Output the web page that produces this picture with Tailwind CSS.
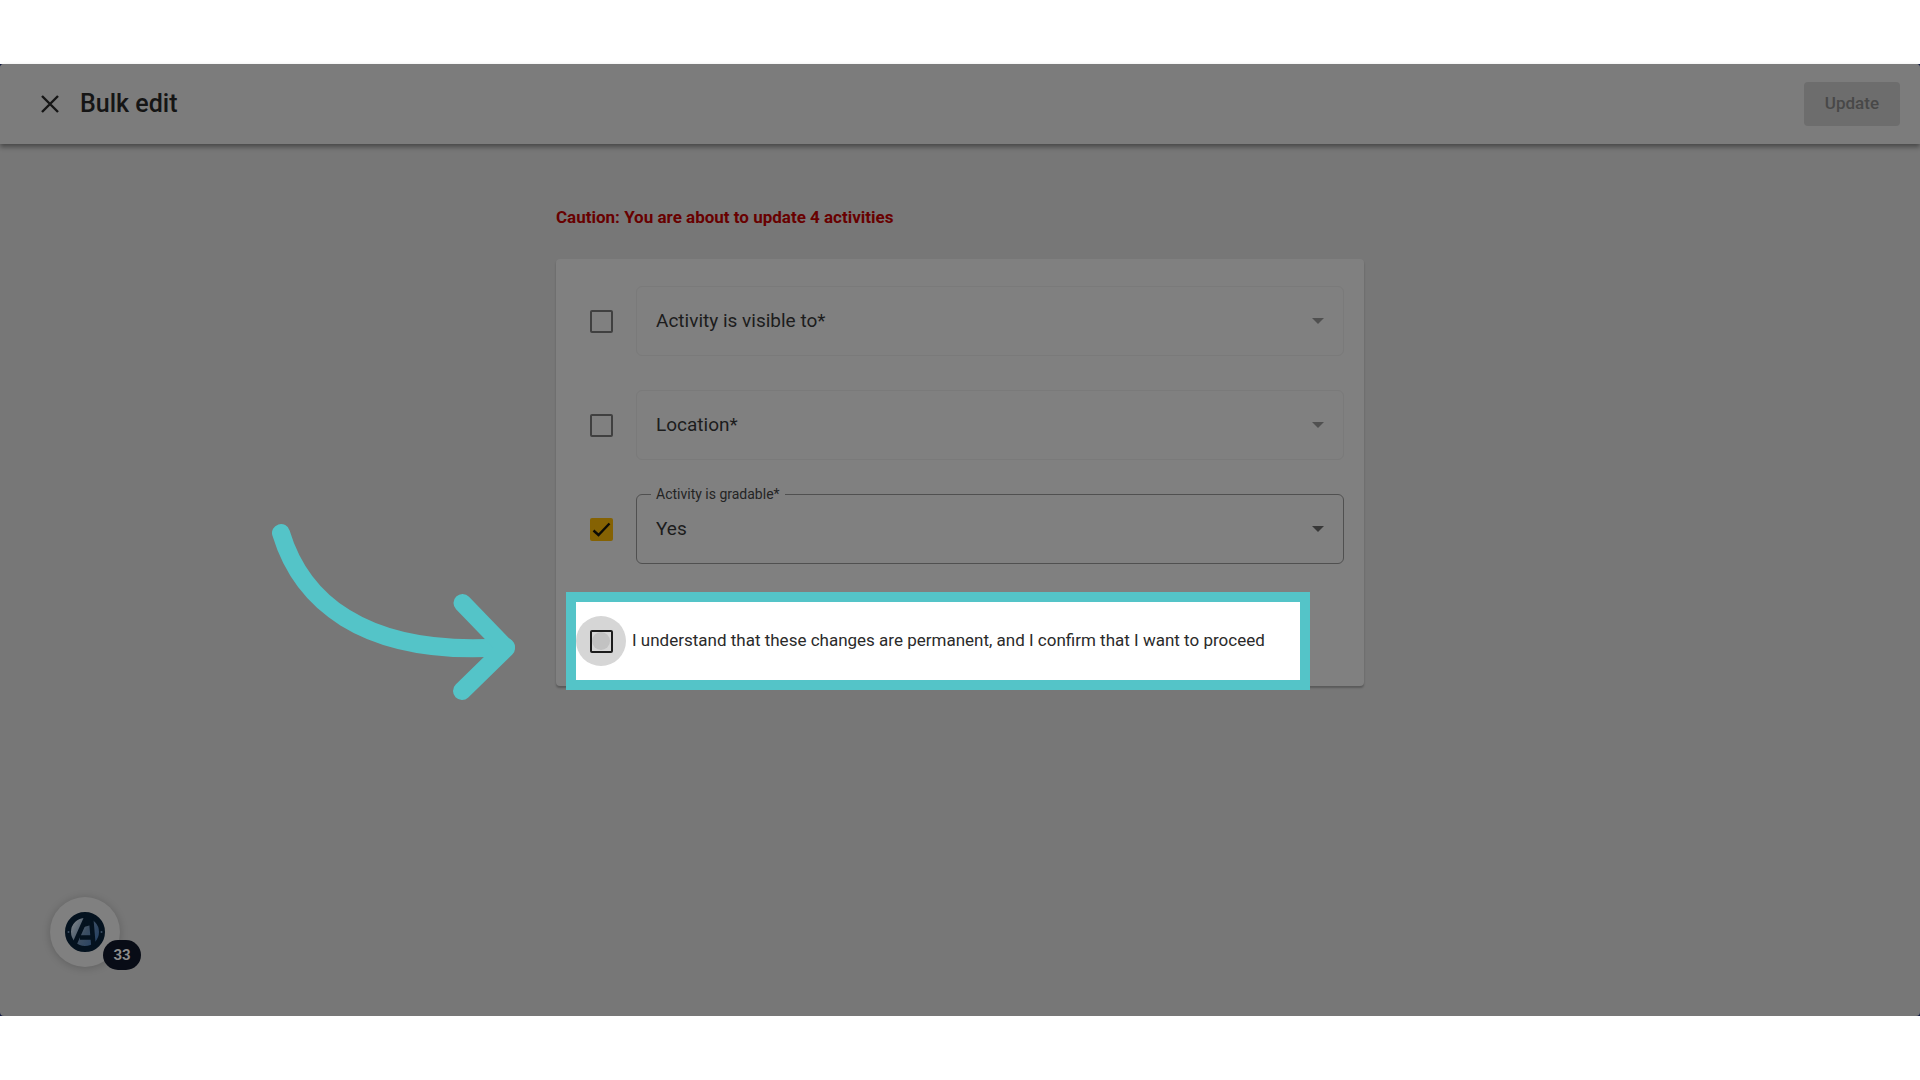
<!DOCTYPE html>
<html lang="en">
<head>
    <meta charset="UTF-8">
    <meta name="viewport" content="width=device-width, initial-scale=1.0">
    <title>Bulk edit</title>
    <script src="https://cdn.jsdelivr.net/npm/@tailwindcss/browser@4"></script>
</head>
<body class="min-h-screen flex flex-col bg-white py-16 font-['Roboto','Liberation_Sans',sans-serif] text-[#1c1c1c]">
    <div class="flex-1 flex flex-col bg-[#101a44]">
        <div class="relative flex-1 flex flex-col rounded bg-[#777777]">
            <!-- Top bar -->
            <header class="flex items-center h-20 pl-[38px] pr-5 rounded-t bg-[#7c7c7c] shadow-[0_3px_5px_rgba(0,0,0,0.4)]">
                <button type="button" aria-label="Close" class="mr-[18px]">
                    <svg class="size-6" viewBox="0 0 24 24" fill="none" stroke="#151515" stroke-width="2.4">
                        <path d="M4 4L20 20M20 4L4 20"/>
                    </svg>
                </button>
                <h1 class="text-[25px] leading-8 font-medium text-[#151515]">Bulk edit</h1>
                <button type="button" disabled class="ml-auto h-11 px-[21px] rounded bg-[#6d6d6d] text-[17px] font-medium text-[#484848]">Update</button>
            </header>

            <main class="w-full max-w-[808px] mx-auto pt-[59px]">
                <p class="text-[17px] leading-7 font-bold text-[#680000]">Caution: You are about to update 4 activities</p>

                <form class="flex flex-col mt-7 pt-[27px] rounded bg-[#808080] shadow-[0_2px_2px_rgba(0,0,0,0.25)]">
                    <div class="flex flex-col gap-[34px] pl-[34px] pr-5">
                        <div class="flex items-center gap-[23px]">
                            <input type="checkbox" aria-label="Change activity visibility" class="appearance-none size-[23px] shrink-0 rounded-xs border-2 border-[#404040]">
                            <div class="relative flex-1">
                                <select aria-label="Activity is visible to" class="appearance-none block w-full h-[70px] px-[19px] rounded-md border border-[#7a7a7a] text-[19px] text-[#1c1c1c]">
                                    <option>Activity is visible to*</option>
                                </select>
                                <svg class="absolute right-5 top-8 w-3 h-[6px] pointer-events-none" viewBox="0 0 12 6" fill="#505050"><path d="M0 0h12L6 6z"/></svg>
                            </div>
                        </div>
                        <div class="flex items-center gap-[23px]">
                            <input type="checkbox" aria-label="Change location" class="appearance-none size-[23px] shrink-0 rounded-xs border-2 border-[#404040]">
                            <div class="relative flex-1">
                                <select aria-label="Location" class="appearance-none block w-full h-[70px] px-[19px] rounded-md border border-[#7a7a7a] text-[19px] text-[#1c1c1c]">
                                    <option>Location*</option>
                                </select>
                                <svg class="absolute right-5 top-8 w-3 h-[6px] pointer-events-none" viewBox="0 0 12 6" fill="#505050"><path d="M0 0h12L6 6z"/></svg>
                            </div>
                        </div>
                        <div class="flex items-center gap-[23px]">
                            <div class="relative size-[23px] shrink-0">
                                <input type="checkbox" checked aria-label="Change gradable" class="appearance-none block size-full rounded-xs bg-[#856203]">
                                <svg class="absolute inset-0 size-full pointer-events-none" viewBox="0 0 23 23" fill="none" stroke="#0c0b05" stroke-width="2.4"><path d="M3.5 12.5L8.5 17L19.5 5.5"/></svg>
                            </div>
                            <div class="relative flex-1">
                                <label for="gradable" class="absolute left-[15px] -top-[10px] px-[5px] bg-[#808080] text-sm leading-5 text-[#242424]">Activity is gradable*</label>
                                <select id="gradable" class="appearance-none block w-full h-[70px] px-[19px] rounded-md border border-[#505050] text-[19px] text-[#1c1c1c]">
                                    <option>Yes</option>
                                    <option>No</option>
                                </select>
                                <svg class="absolute right-5 top-8 w-3 h-[6px] pointer-events-none" viewBox="0 0 12 6" fill="#383838"><path d="M0 0h12L6 6z"/></svg>
                            </div>
                        </div>
                    </div>

                    <!-- Highlighted confirmation -->
                    <div class="relative mt-7 ml-[10px] mr-[54px] -mb-1 border-10 border-[#54c4c8] bg-white">
                        <label class="flex items-center gap-[6px] h-[78px]">
                            <span class="relative flex items-center justify-center size-[50px] rounded-full bg-[#d6d6d6]">
                                <span class="absolute size-[18px] rounded-full bg-[#c2c2c2]"></span>
                                <input type="checkbox" class="relative appearance-none size-[23px] rounded-xs border-2 border-[#1c1c1c]">
                            </span>
                            <span class="text-[17px] text-[#2a2a2a]">I understand that these changes are permanent, and I confirm that I want to proceed</span>
                        </label>
                        <svg class="absolute right-full bottom-0 mr-[60px] -mb-[30px] w-[266px] h-[200px]" viewBox="250 510 266 200" fill="none" stroke="#54c4c8" stroke-width="18" stroke-linecap="round" stroke-linejoin="round">
                            <path d="M281 533C300 596 358 658 506 647"/>
                            <path d="M462.500 603L506 648L462 691"/>
                        </svg>
                    </div>
                </form>
            </main>

            <!-- Help widget -->
            <div class="absolute left-[50px] bottom-[49px]">
                <button type="button" aria-label="Open help" class="flex items-center justify-center size-[70px] rounded-full bg-[#808080] shadow-[0_1px_8px_rgba(0,0,0,0.2)]">
                    <svg class="size-10" viewBox="0 0 40 40" fill="none">
                        <defs>
                            <linearGradient id="globe" x1="0" y1="0.2" x2="1" y2="0.8">
                                <stop offset="0.1" stop-color="#7b8288"/>
                                <stop offset="0.5" stop-color="#3d4f63"/>
                                <stop offset="1" stop-color="#1f3d62"/>
                            </linearGradient>
                        </defs>
                        <circle cx="20" cy="20" r="17" fill="url(#globe)" stroke="#04121f" stroke-width="6"/>
                        <path d="M9.500 32L21.500 5M26 5L28.500 34M15 25.500H27" stroke="#04121f" stroke-width="4.600"/>
                        <path d="M19.500 4H28L26 13L19 15z" fill="#04121f"/>
                        <circle cx="3.500" cy="20" r="1" fill="#3b4f63"/>
                        <circle cx="36.500" cy="20" r="1" fill="#3b4f63"/>
                    </svg>
                </button>
                <span class="absolute left-[53px] top-[43px] flex items-center justify-center w-[38px] h-[30px] rounded-full bg-[#080c16] text-[15px] font-bold text-[#8c8c8c]">33</span>
            </div>
        </div>
    </div>
</body>
</html>
